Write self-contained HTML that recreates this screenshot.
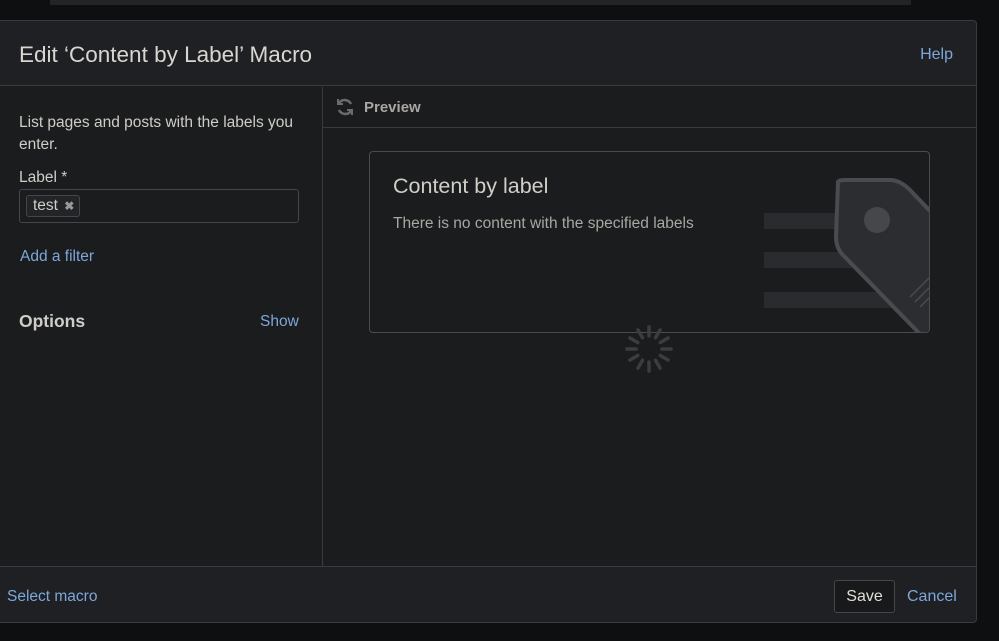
<!DOCTYPE html>
<html><head><meta charset="utf-8"><style>
*{margin:0;padding:0;box-sizing:border-box}
body{width:999px;height:641px;background:#0e0f11;position:relative;overflow:hidden;font-family:"Liberation Sans",sans-serif}
.top{position:absolute;left:50px;top:0;width:861px;height:5px;background:#232427}
.dlg{position:absolute;left:0;top:20px;width:977px;height:603px;background:#1b1c1e;border:1px solid #3a3b3e;border-left:none;border-radius:0 4px 4px 0;overflow:hidden}
.hd{position:absolute;left:0;top:0;right:0;height:65px;background:#1f2023;border-bottom:1px solid #3a3b3e}
.hd h1{position:absolute;left:19px;top:21px;font-size:22.5px;font-weight:normal;color:#d8d6d0}
.link{color:#7da7d9}
.help{position:absolute;right:23px;top:25px;font-size:16px}
.left{position:absolute;left:0;top:66px;width:323px;height:479px;border-right:1px solid #3a3b3e}
.desc{position:absolute;left:19px;top:25px;width:290px;font-size:15.5px;line-height:22px;color:#cfcdc7}
.lbl{position:absolute;left:19px;top:82px;font-size:15.5px;color:#cfcdc7}
.inp{position:absolute;left:19px;top:102px;width:280px;height:34px;border:1px solid #45464a;border-radius:3px}
.tag{position:absolute;left:6px;top:5px;height:22px;padding:0 5px 0 6px;border:1px solid #45464a;border-radius:3px;background:#232427;font-size:15.5px;color:#cfcdc7;line-height:20px}
.tag b{font-size:12px;color:#999;margin-left:2px}
.add{position:absolute;left:20px;top:161px;font-size:15.5px}
.opt{position:absolute;left:19px;top:224px;font-size:17.5px;font-weight:bold;color:#cfcdc7}
.show{position:absolute;left:260px;top:226px;font-size:15.5px}
.ph{position:absolute;left:323px;top:66px;right:0;height:41px;border-bottom:1px solid #3a3b3e}
.ph span{position:absolute;left:41px;top:12px;font-size:15px;font-weight:bold;color:#a9a7a2}
.card{position:absolute;left:369px;top:151px;width:561px;height:182px;border:1px solid #4a4b4f;border-radius:4px;overflow:hidden;background:#1b1c1e}
.card h2{position:absolute;left:23px;top:22px;font-size:21.5px;font-weight:normal;color:#d0cec8}
.card p{position:absolute;left:23px;top:63px;font-size:15.5px;color:#a9a7a2}
.ft{position:absolute;left:0;top:545px;right:0;height:57px;background:#1f2023;border-top:1px solid #3a3b3e}
.sel{position:absolute;left:7px;top:21px;font-size:15.5px}
.save{position:absolute;left:834px;top:13px;width:61px;height:33px;border:1px solid #45464a;border-radius:3px;background:#18191b;color:#e0ded8;font-size:16px;text-align:center;line-height:31px}
.cancel{position:absolute;left:907px;top:21px;font-size:16px}
</style></head><body>
<div class="top"></div>
<div class="dlg">
 <div class="hd"><h1>Edit ‘Content by Label’ Macro</h1><span class="link help">Help</span></div>
 <div class="left">
  <div class="desc">List pages and posts with the labels you enter.</div>
  <div class="lbl">Label *</div>
  <div class="inp"><div class="tag">test <b>✖</b></div></div>
  <div class="add link">Add a filter</div>
  <div class="opt">Options</div>
  <div class="show link">Show</div>
 </div>
 <div class="ph">
  <svg style="position:absolute;left:12px;top:10px" width="20" height="20" viewBox="0 0 20 20" fill="none" stroke="#6a6b6e" stroke-width="2.5"><path d="M16 7A7 7 0 0 0 4 6"/><path d="M3 2v5h5" stroke-width="2"/><path d="M4 13a7 7 0 0 0 12 1"/><path d="M17 18v-5h-5" stroke-width="2"/></svg>
  <span>Preview</span>
 </div>
 <div class="ft"><span class="link sel">Select macro</span><div class="save">Save</div><span class="link cancel">Cancel</span></div>
</div>
<div class="card">
 <h2>Content by label</h2>
 <p>There is no content with the specified labels</p>
 <svg style="position:absolute;left:0;top:0" width="561" height="182">
  <rect x="394" y="61" width="90" height="16" fill="#2a2b2e"/>
  <rect x="394" y="100" width="110" height="16" fill="#2a2b2e"/>
  <rect x="394" y="140" width="150" height="16" fill="#2a2b2e"/>
  <path d="M468 30 Q468 28 478 28 L520 28 Q530 28 540 38 L580 80 L580 190 L550 182 L472 102 Q466 95 466 85 Z" fill="#2c2d30" stroke="#4a4b4f" stroke-width="4"/>
  <circle cx="507" cy="68" r="13" fill="#46474a"/>
  <path d="M540 145l20-20M545 150l20-20M550 155l20-20" stroke="#4a4b4f" stroke-width="1.5"/>
 </svg>
</div>
<svg style="position:absolute;left:623px;top:323px" width="52" height="52" viewBox="-26 -26 52 52">
 <g stroke="#3b3d40" stroke-width="3.5" stroke-linecap="round">
  <line x1="0" y1="-13" x2="0" y2="-22" transform="rotate(0)"/>
  <line x1="0" y1="-13" x2="0" y2="-22" transform="rotate(30)"/>
  <line x1="0" y1="-13" x2="0" y2="-22" transform="rotate(60)"/>
  <line x1="0" y1="-13" x2="0" y2="-22" transform="rotate(90)"/>
  <line x1="0" y1="-13" x2="0" y2="-22" transform="rotate(120)"/>
  <line x1="0" y1="-13" x2="0" y2="-22" transform="rotate(150)"/>
  <line x1="0" y1="-13" x2="0" y2="-22" transform="rotate(180)"/>
  <line x1="0" y1="-13" x2="0" y2="-22" transform="rotate(210)"/>
  <line x1="0" y1="-13" x2="0" y2="-22" transform="rotate(240)"/>
  <line x1="0" y1="-13" x2="0" y2="-22" transform="rotate(270)"/>
  <line x1="0" y1="-13" x2="0" y2="-22" transform="rotate(300)"/>
  <line x1="0" y1="-13" x2="0" y2="-22" transform="rotate(330)"/>
 </g>
</svg>
</body></html>
